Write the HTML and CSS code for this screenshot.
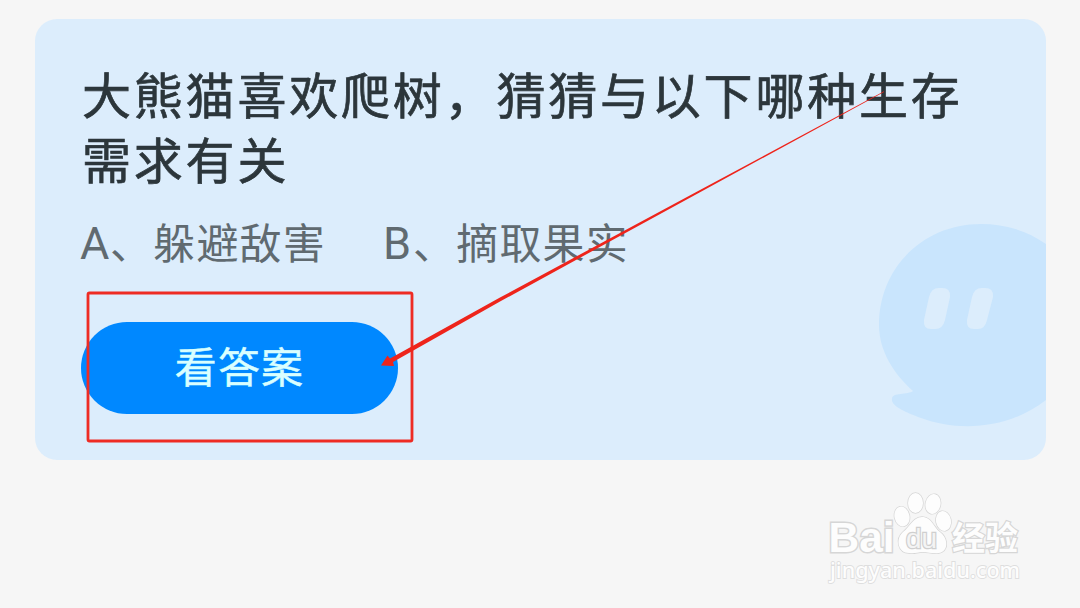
FILE: index.html
```html
<!DOCTYPE html>
<html lang="zh-CN">
<head>
<meta charset="utf-8">
<title>看答案</title>
<link rel="stylesheet" href="styles.css">
</head>
<body>
<main class="card">
  <svg class="mascot" viewBox="0 0 168 204" aria-hidden="true">
    <path class="mascot-body" d="M168 21 C148 7 126 1 103 1 C45 1 1 45 1 102 C1 128 16 151 35 168 C30 172 14 169 14 176 C13 183 27 189 43 195 C78 208 128 208 168 177 Z"/>
    <path class="mascot-eye" d="M61 65 H64 Q73 65 72 74 L67 97 Q65 106 57 106 H53 Q45 106 46 97 L51 74 Q53 65 61 65 Z M104 65 H107 Q116 65 115 74 L109 97 Q107 106 100 106 H96 Q88 106 89 97 L94 74 Q96 65 104 65 Z"/>
  </svg>
  <h1 class="question">大熊猫喜欢爬树，猜猜与以下哪种生存<br>需求有关</h1>
  <div class="options"><span class="option"><span class="letter">A</span>、躲避敌害</span><span class="option"><span class="letter">B</span>、摘取果实</span></div>
  <button class="answer" type="button">看答案</button>
</main>
<svg class="marks" viewBox="0 0 1080 608" aria-hidden="true">
  <rect class="frame" x="88" y="293" width="324" height="148" rx="1.5"/>
  <path class="arrow" d="M381 365.500 L387.500 355.500 L390 358.500 L500 297.500 L700 190 L884 91.300 L884 92 L700 192.200 L500 301.500 L393 362 L394 366 Z"/>
</svg>
<svg class="watermark" viewBox="0 0 220 120" aria-label="Baidu 经验">
  <text class="brand" x="13.500" y="72" textLength="66" lengthAdjust="spacingAndGlyphs">Bai</text>
  <g class="paw">
    <ellipse cx="87" cy="36.500" rx="7.500" ry="10" transform="rotate(-12 87 36.500)"/>
    <ellipse cx="100.500" cy="23" rx="7.500" ry="10"/>
    <ellipse cx="118" cy="24" rx="7.500" ry="10" transform="rotate(12 118 24)"/>
    <ellipse cx="128.500" cy="41" rx="7.500" ry="10" transform="rotate(-12 128.500 41)"/>
    <path d="M107 37 C98 37 95 47 88 52 C80 59 83 73 94 73 C100 74 102 72 108 72 C114 72 120 75 127 72 C134 68 132 57 125 52 C118 47 117 37 107 37 Z"/>
  </g>
  <text class="du" x="91" y="67.500" textLength="31" lengthAdjust="spacingAndGlyphs">du</text>
  <text class="cn" x="137" y="70" textLength="66">经验</text>
  <text class="url" x="15" y="98" textLength="190" lengthAdjust="spacingAndGlyphs">jingyan.baidu.com</text>
</svg>
</body>
</html>
```
FILE: styles.css
```css
* { box-sizing: border-box; }
body {
  position: relative;
  width: 1080px;
  height: 608px;
  margin: 0;
  padding: 19px 34px 0 35px;
  overflow: hidden;
  background: #f6f6f6;
  font-family: "Noto Sans CJK SC", sans-serif;
}
.card {
  position: relative;
  height: 441px;
  padding: 42px 0 0 47px;
  border-radius: 22px;
  overflow: hidden;
  background: #dcedfc;
}
.mascot {
  position: absolute;
  right: 0;
  bottom: 33px;
  width: 168px;
  height: 204px;
}
.mascot-body { fill: #c9e5fd; }
.mascot-eye { fill: #dcedfc; }
.question {
  position: relative;
  margin: 0;
  color: #2c363b;
  font-size: 49px;
  font-weight: 400;
  line-height: 64.5px;
  letter-spacing: 2.8px;
  white-space: nowrap;
  -webkit-text-stroke: 0.7px #2c363b;
}
.options {
  display: flex;
  gap: 56px;
  margin: 22px 0 0 -2px;
  color: #606a70;
  font-size: 42px;
  line-height: 58px;
  letter-spacing: 1.2px;
  white-space: nowrap;
}
.option { width: 247px; }
.letter {
  display: inline-block;
  width: 30px;
  font-family: Roboto, sans-serif;
  font-size: 45px;
  line-height: 1;
}
.answer {
  display: block;
  width: 317px;
  height: 92px;
  margin: 52px 0 0 -1px;
  padding: 0 0 6px;
  border: 0;
  border-radius: 46px;
  background: #0088ff;
  color: #d9ffff;
  font: 400 42px/86px "Noto Sans CJK SC", sans-serif;
  letter-spacing: 1.2px;
  -webkit-text-stroke: 0.4px #d9ffff;
}
.marks { position: absolute; inset: 0; width: 1080px; height: 608px; }
.frame { fill: none; stroke: #ee2c24; stroke-width: 2.8; }
.arrow { fill: #ee241b; }
.watermark {
  position: absolute;
  left: 815px;
  top: 480px;
  width: 220px;
  height: 120px;
  fill: #fdfdfd;
  stroke: #d6d6d6;
  stroke-width: 1.4;
  paint-order: stroke fill;
}
.brand { font: bold 43px "Liberation Sans", Arial, sans-serif; stroke-width: 3; }
.du { font: 28px "Liberation Sans", Arial, sans-serif; fill: #f4f4f4; stroke: #cfcfcf; stroke-width: 2.5; }
.cn { font: bold 33px "Noto Sans CJK SC", sans-serif; stroke-width: 2.4; }
.url { font: 500 22px "Noto Sans", sans-serif; stroke: #dedede; stroke-width: 1.8; }
```
